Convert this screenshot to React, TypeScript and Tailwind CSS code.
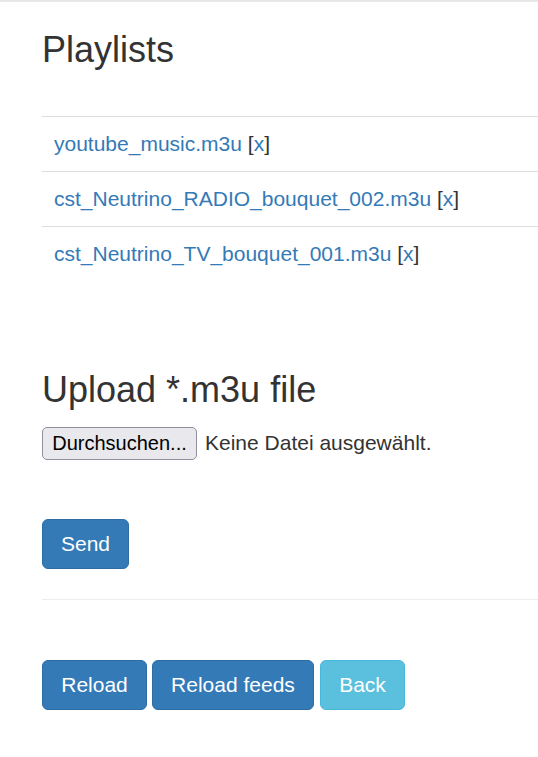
import React from 'react';

const playlists = [
  'youtube_music.m3u',
  'cst_Neutrino_RADIO_bouquet_002.m3u',
  'cst_Neutrino_TV_bouquet_001.m3u',
];

export default function App() {
  return (
    <div
      className="min-h-screen bg-white border-t-2 border-[#e7e7e7] text-[#333] overflow-hidden"
      style={{ fontFamily: '"Liberation Sans", Arial, sans-serif' }}
    >
      <div className="pl-[42px]">
        {/* Playlists */}
        <h3 className="mt-[28px] text-[36px] leading-[40px] font-normal">Playlists</h3>
        <table className="mt-[46px] w-[600px] text-[21px] leading-[30px]">
          <tbody>
            {playlists.map((name) => (
              <tr key={name} className="border-t border-[#dddddd]">
                <td className="px-[12px] py-[12px] h-[55px]">
                  <a href="#" className="text-[#337ab7]">{name}</a>{' '}
                  [<a href="#" className="text-[#337ab7]">x</a>]
                </td>
              </tr>
            ))}
          </tbody>
        </table>

        {/* Upload */}
        <h3 className="mt-[88px] text-[36px] leading-[40px] font-normal">Upload *.m3u file</h3>
        <div className="mt-[17px] flex items-center h-[33px]">
          <button className="h-[33px] w-[155px] rounded-[5px] border border-[#8f8f9d] bg-[#e9e9ed] text-black text-[20px] leading-none">
            Durchsuchen...
          </button>
          <span className="ml-[8px] text-[21px]">Keine Datei ausgewählt.</span>
        </div>

        <button className="mt-[59px] h-[50px] px-[18px] rounded-[6px] border border-[#2e6da4] bg-[#337ab7] text-white text-[21px] leading-[30px]">
          Send
        </button>

        <hr className="mt-[30px] border-t border-[#eeeeee] w-[600px]" />

        <div className="mt-[60px] flex gap-[5px]">
          <button className="h-[50px] w-[105px] rounded-[6px] border border-[#2e6da4] bg-[#337ab7] text-white text-[21px]">
            Reload
          </button>
          <button className="h-[50px] w-[162px] rounded-[6px] border border-[#2e6da4] bg-[#337ab7] text-white text-[21px]">
            Reload feeds
          </button>
          <button className="ml-[1px] h-[50px] w-[85px] rounded-[6px] border border-[#46b8da] bg-[#5bc0de] text-white text-[21px]">
            Back
          </button>
        </div>
      </div>
    </div>
  );
}
